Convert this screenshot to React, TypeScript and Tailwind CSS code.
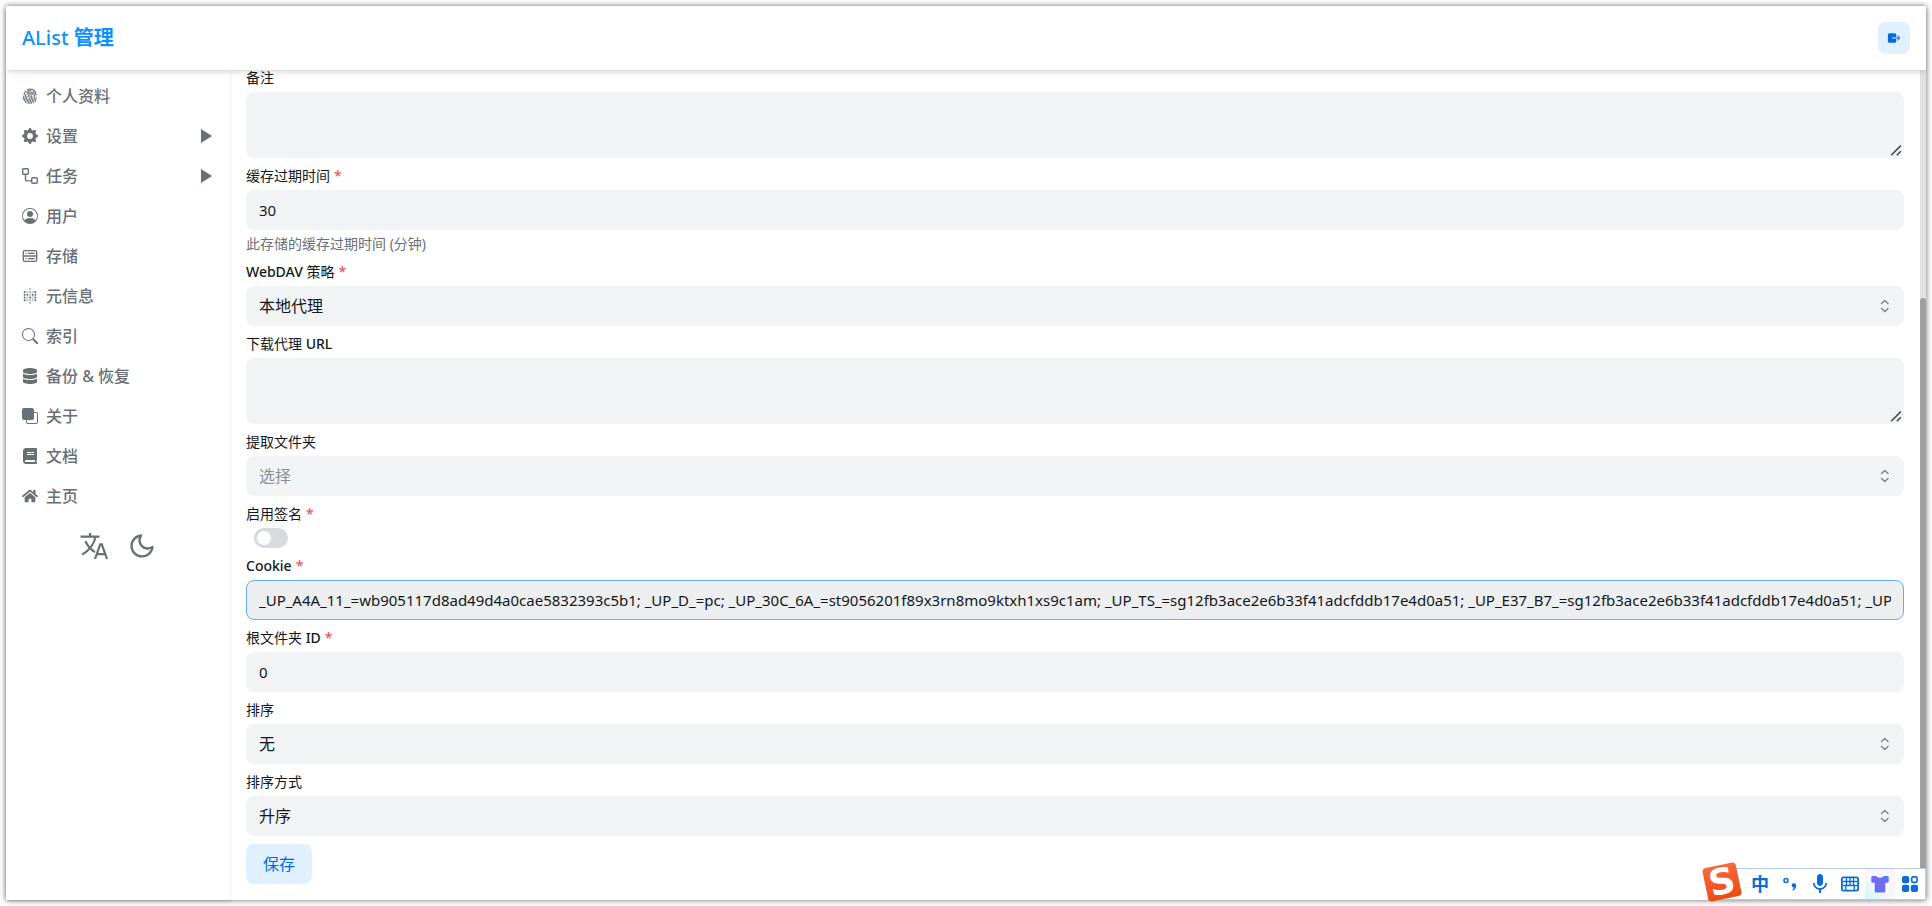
import type { ReactNode } from "react";
import { BsFingerprint, BsFront, BsGearFill, BsPersonCircle, BsSearch } from "react-icons/bs";
import { CgDatabase } from "react-icons/cg";
import { FaBook, FaDatabase, FaHome } from "react-icons/fa";
import { FiMoon } from "react-icons/fi";
import { IoExit } from "react-icons/io5";
import { MdMic } from "react-icons/md";
import { SiMetabase } from "react-icons/si";

function WorkflowIcon({ className }: { className?: string }) {
  return (
    <svg viewBox="0 0 16 16" className={className} fill="none" stroke="currentColor" strokeWidth="1.4">
      <rect x="0.7" y="0.7" width="5.6" height="5.6" rx="1" />
      <rect x="9.7" y="9.7" width="5.6" height="5.6" rx="1" />
      <path d="M3.5 6.3V10.9a2 2 0 0 0 2 2H9.7" />
    </svg>
  );
}

function LanguageIcon() {
  return (
    <svg viewBox="0 0 28 28" className="size-7" fill="none" stroke="currentColor" strokeWidth="2.2">
      <path d="M0.5 4.6H19.5M10 1V4.6M15.6 4.6C14.2 11.6 9 18.6 2.2 22.6M5.4 9.2C7.4 13.6 11 17.6 15 20.2" />
      <path d="M15 27 20.2 12.4H21.8L27 27M16.8 22.2H25.2" />
    </svg>
  );
}

const menu = [
  { title: "个人资料", icon: BsFingerprint },
  { title: "设置", icon: BsGearFill, nested: true },
  { title: "任务", icon: WorkflowIcon, nested: true },
  { title: "用户", icon: BsPersonCircle },
  { title: "存储", icon: CgDatabase },
  { title: "元信息", icon: SiMetabase },
  { title: "索引", icon: BsSearch },
  { title: "备份 & 恢复", icon: FaDatabase },
  { title: "关于", icon: BsFront },
  { title: "文档", icon: FaBook },
  { title: "主页", icon: FaHome },
];

const cookie =
  "_UP_A4A_11_=wb905117d8ad49d4a0cae5832393c5b1; _UP_D_=pc; _UP_30C_6A_=st9056201f89x3rn8mo9ktxh1xs9c1am; _UP_TS_=sg12fb3ace2e6b33f41adcfddb17e4d0a51; _UP_E37_B7_=sg12fb3ace2e6b33f41adcfddb17e4d0a51; _UP_F7E_8D_=";

function Header() {
  return (
    <header className="relative z-10 flex h-16 shrink-0 items-center justify-between bg-white px-4 shadow-md">
      <a href="#" className="text-xl font-bold text-[#0d91ff]">
        <span className="font-medium">AList</span> 管理
      </a>
      <button
        aria-label="logout"
        className="flex size-8 items-center justify-center rounded-lg bg-[#e1f0ff] text-[#006adc]"
      >
        <IoExit className="size-3.5" />
      </button>
    </header>
  );
}

function SideMenu() {
  return (
    <nav className="w-56 shrink-0 pt-1.5 text-[#687076] shadow-sm">
      {menu.map(({ title, icon: Icon, nested }) => (
        <a key={title} href="#" className="flex h-10 items-center gap-2 px-4 font-medium">
          <Icon className="size-4" />
          <span className="flex-1">{title}</span>
          {nested && (
            <svg viewBox="0 0 11 14" className="mr-0.5 h-3.5 w-[11px]" fill="currentColor">
              <path d="M0 0 11 7 0 14Z" />
            </svg>
          )}
        </a>
      ))}
      <div className="flex items-center justify-center gap-5 py-4">
        <button aria-label="language">
          <LanguageIcon />
        </button>
        <button aria-label="theme">
          <FiMoon className="size-7" />
        </button>
      </div>
    </nav>
  );
}

type FieldProps = {
  id: string;
  label: ReactNode;
  required?: boolean;
  help?: string;
  children: ReactNode;
};

function Field({ id, label, required, help, children }: FieldProps) {
  return (
    <div className="flex flex-col">
      <label htmlFor={id} className="mb-1 text-sm/5">
        {label}
        {required && <span className="ml-1 text-[#e5484d]">*</span>}
      </label>
      {children}
      {help && <p className="mt-1 text-sm/5 text-[#687076]">{help}</p>}
    </div>
  );
}

function TextArea({ id }: { id: string }) {
  return (
    <div className="grid">
      <textarea
        id={id}
        className="col-start-1 row-start-1 h-[66px] w-full resize-none rounded-lg border border-transparent bg-[#f1f3f5] px-3 py-2"
      />
      <svg
        viewBox="0 0 12 12"
        className="pointer-events-none col-start-1 row-start-1 mr-0.5 mb-0.5 size-3 self-end justify-self-end text-[#45484b]"
        fill="none"
        stroke="currentColor"
        strokeWidth="1.5"
      >
        <path d="M1.2 11.2 10.8 1.6M6.8 11.2 10.8 7.2" />
      </svg>
    </div>
  );
}

function Input({ id, value }: { id: string; value: string }) {
  return (
    <input
      id={id}
      defaultValue={value}
      className="h-10 rounded-lg border border-transparent bg-[#f1f3f5] px-3 text-[15px]"
    />
  );
}

function Select({ id, value, placeholder }: { id: string; value: string; placeholder?: boolean }) {
  return (
    <div className="grid items-center">
      <select
        id={id}
        className={`col-start-1 row-start-1 h-10 w-full appearance-none rounded-lg border border-transparent bg-[#f1f3f5] px-3 ${
          placeholder ? "text-[#889096]" : ""
        }`}
      >
        <option>{value}</option>
      </select>
      <svg
        viewBox="0 0 16 16"
        className="pointer-events-none col-start-1 row-start-1 mr-3 size-4 justify-self-end text-[#7e868c]"
        fill="none"
        stroke="currentColor"
        strokeWidth="1.5"
        strokeLinecap="round"
        strokeLinejoin="round"
      >
        <path d="M5.5 5.5 8.8 2.5 12 5.5M5.5 10.5 8.8 13.5 12 10.5" />
      </svg>
    </div>
  );
}

function StorageForm() {
  return (
    <form className="flex shrink-0 flex-col gap-2 px-4 pb-4" onSubmit={(e) => e.preventDefault()}>
      <Field id="remark" label="备注">
        <TextArea id="remark" />
      </Field>
      <Field id="cache_expiration" label="缓存过期时间" required help="此存储的缓存过期时间 (分钟)">
        <Input id="cache_expiration" value="30" />
      </Field>
      <Field
        id="webdav_policy"
        label={
          <>
            <span className="font-medium">WebDAV</span> 策略
          </>
        }
        required
      >
        <Select id="webdav_policy" value="本地代理" />
      </Field>
      <Field
        id="down_proxy_url"
        label={
          <>
            下载代理 <span className="font-medium">URL</span>
          </>
        }
      >
        <TextArea id="down_proxy_url" />
      </Field>
      <Field id="extract_folder" label="提取文件夹">
        <Select id="extract_folder" value="选择" placeholder />
      </Field>
      <Field id="enable_sign" label="启用签名" required>
        <input
          id="enable_sign"
          type="checkbox"
          role="switch"
          className="ml-2 h-5 w-[34px] appearance-none rounded-full bg-[#d7dbdf] before:m-[3px] before:block before:size-3.5 before:rounded-full before:bg-white checked:bg-[#0091ff] checked:before:ml-[17px]"
        />
      </Field>
      <Field id="cookie" label={<span className="font-medium">Cookie</span>} required>
        <input
          id="cookie"
          defaultValue={cookie}
          className="h-10 rounded-lg border border-[#5eb0ef] bg-[#eceef0] px-3 text-[15px] outline-none"
        />
      </Field>
      <Field
        id="root_folder_id"
        label={
          <>
            根文件夹 <span className="font-medium">ID</span>
          </>
        }
        required
      >
        <Input id="root_folder_id" value="0" />
      </Field>
      <Field id="order_by" label="排序">
        <Select id="order_by" value="无" />
      </Field>
      <Field id="order_direction" label="排序方式">
        <Select id="order_direction" value="升序" />
      </Field>
      <button className="h-10 self-start rounded-lg border border-transparent bg-[#e1f0ff] px-4 text-[#006adc]">
        保存
      </button>
    </form>
  );
}

// floating input method toolbar in the window corner
function InputMethodBar() {
  return (
    <div className="absolute right-0 bottom-0 z-20 flex h-8 items-center border border-[#b4cbe8] bg-white pl-9 text-[#0a6cd8]">
      <div className="absolute bottom-0 -left-1 flex size-[34px] -rotate-12 items-center justify-center rounded-sm bg-linear-to-b from-[#f9683a] to-[#ee4a10] font-['DejaVu_Sans',sans-serif] text-4xl/8 font-bold text-white">
        S
      </div>
      <button className="w-[30px] text-lg/6 font-bold">中</button>
      <button aria-label="punctuation" className="flex w-[30px] justify-center">
        <svg viewBox="0 0 16 16" className="size-4">
          <circle cx="4" cy="4.5" r="2" fill="none" stroke="currentColor" strokeWidth="1.6" />
          <path
            d="M11.8 7.2a2.2 2.2 0 0 1 2.3 2.4c0 2.6-1.2 4.3-3.3 5.1l-.5-1c1-.5 1.5-1.2 1.6-2.1a2.2 2.2 0 0 1-.1-4.4Z"
            fill="currentColor"
          />
        </svg>
      </button>
      <button aria-label="voice" className="flex w-[30px] justify-center">
        <MdMic className="size-6" />
      </button>
      <button aria-label="keyboard" className="flex w-[30px] justify-center">
        <svg viewBox="0 0 18 16" className="h-4 w-[18px]" fill="none" stroke="currentColor">
          <rect x="0.9" y="1.4" width="16.2" height="13.2" rx="1.6" strokeWidth="1.8" />
          <path d="M2 5.5H16M2 9.5H16M5.5 2V9.5M9 2V9.5M12.5 2V9.5M4.8 9.5V14M13.2 9.5V14" strokeWidth="1.3" />
        </svg>
      </button>
      <button
        aria-label="skin"
        className="flex h-full w-[30px] items-center justify-center bg-linear-to-tr from-[#d3f6fb] via-[#f6f8fd] to-[#fdf3fb]"
      >
        <svg viewBox="0 0 18 18" className="size-[18px]">
          <defs>
            <linearGradient id="shirt" x1="0" y1="1" x2="1" y2="0">
              <stop offset="0" stopColor="#3f7bf5" />
              <stop offset="0.5" stopColor="#7a68f0" />
              <stop offset="1" stopColor="#4a7dfb" />
            </linearGradient>
          </defs>
          <path
            d="M1.500 1H5.500C6 3.200 12 3.200 12.500 1H16.500A1.200 1.200 0 0 1 17.700 2.200V6.500A1.200 1.200 0 0 1 16.500 7.700H14.300V16A1.500 1.500 0 0 1 12.800 17.500H5.200A1.500 1.500 0 0 1 3.700 16V7.700H1.500A1.200 1.200 0 0 1 .3 6.500V2.200A1.200 1.200 0 0 1 1.500 1Z"
            fill="url(#shirt)"
          />
        </svg>
      </button>
      <button aria-label="toolbox" className="flex w-[30px] justify-center">
        <svg viewBox="0 0 16 16" className="size-4" fill="currentColor">
          <rect width="7.2" height="7.2" rx="2" />
          <rect y="8.8" width="7.2" height="7.2" rx="2" />
          <rect x="8.8" y="8.8" width="7.2" height="7.2" rx="2" />
          <rect x="9.7" y="0.9" width="5.4" height="5.4" rx="1.6" fill="none" stroke="currentColor" strokeWidth="1.7" />
        </svg>
      </button>
    </div>
  );
}

export default function App() {
  return (
    <div className="h-screen bg-white p-1.5 font-['Noto_Sans','Noto_Sans_CJK_SC',sans-serif] text-base text-[#11181c]">
      <div className="relative flex h-full flex-col bg-white shadow-[0_0_6px_rgba(0,0,0,0.6)]">
        <Header />
        <div className="flex min-h-0 flex-1">
          <SideMenu />
          <main className="-mt-1 flex min-w-0 flex-1 flex-col justify-end overflow-hidden">
            <StorageForm />
          </main>
          <div className="flex w-1.5 shrink-0 flex-col justify-end bg-[#e1e1e1]">
            <div className="h-[602px] max-h-3/4 rounded-t-sm bg-[#9f9f9f]" />
          </div>
        </div>
        <InputMethodBar />
      </div>
    </div>
  );
}
